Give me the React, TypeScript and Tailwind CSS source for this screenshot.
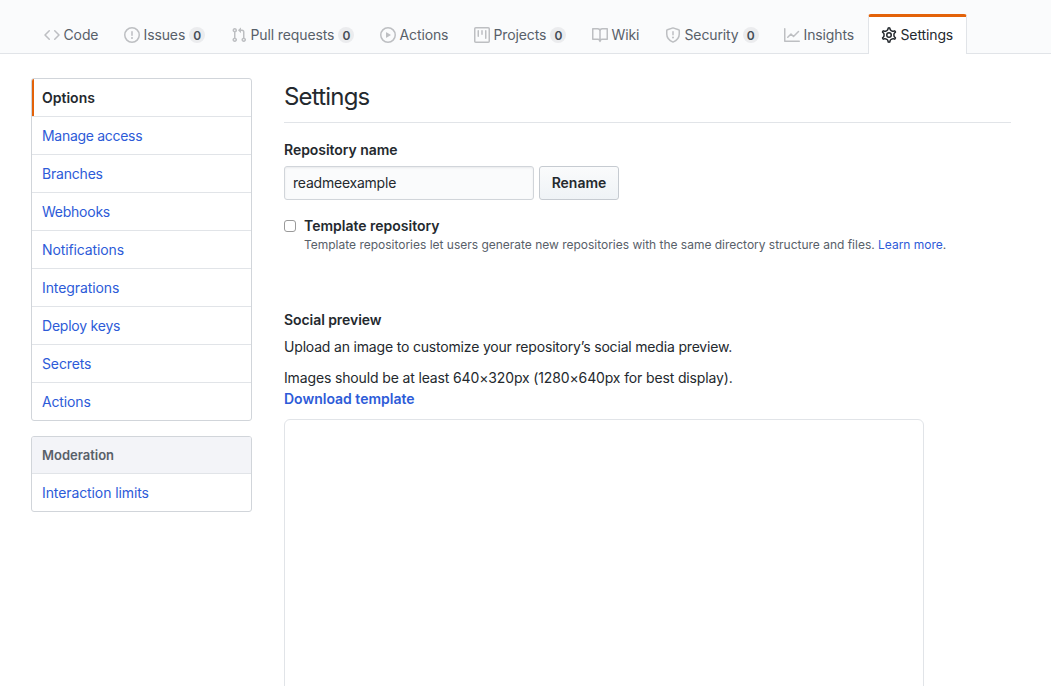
import type { ReactNode } from "react";

const stroke = { fill: "none", stroke: "currentColor", strokeWidth: 1.5 } as const;

function Icon({ children }: { children: ReactNode }) {
  return (
    <svg viewBox="0 0 16 16" width="16" height="16" fill="currentColor" fillRule="evenodd" className="shrink-0">
      {children}
    </svg>
  );
}

const icons = {
  code: (
    <path d="M4.72 3.22a.75.75 0 011.06 1.06L2.06 8l3.72 3.72a.75.75 0 11-1.06 1.06L.47 8.53a.75.75 0 010-1.06l4.25-4.25zm6.56 0a.75.75 0 10-1.06 1.06L13.94 8l-3.72 3.72a.75.75 0 101.06 1.06l4.25-4.25a.75.75 0 000-1.06l-4.25-4.25z" />
  ),
  issue: (
    <path d="M8 1.5a6.5 6.5 0 100 13 6.5 6.5 0 000-13zM0 8a8 8 0 1116 0A8 8 0 010 8zm9 3a1 1 0 11-2 0 1 1 0 012 0zm-.25-6.25a.75.75 0 00-1.5 0v3.5a.75.75 0 001.5 0v-3.5z" />
  ),
  pull: (
    <path d="M7.177 3.073L9.573.677A.25.25 0 0110 .854v4.792a.25.25 0 01-.427.177L7.177 3.427a.25.25 0 010-.354zM3.75 2.5a.75.75 0 100 1.5.75.75 0 000-1.5zm-2.25.75a2.25 2.25 0 113 2.122v5.256a2.251 2.251 0 11-1.5 0V5.372A2.25 2.25 0 011.5 3.25zM11 2.5h-1V4h1a1 1 0 011 1v5.628a2.251 2.251 0 101.5 0V5A2.5 2.5 0 0011 2.5zm1 10.25a.75.75 0 111.5 0 .75.75 0 01-1.5 0zM3.75 12a.75.75 0 100 1.5.75.75 0 000-1.5z" />
  ),
  play: (
    <path d="M1.5 8a6.5 6.5 0 1113 0 6.5 6.5 0 01-13 0zM8 0a8 8 0 100 16A8 8 0 008 0zM6.379 5.227A.25.25 0 006 5.442v5.117a.25.25 0 00.379.214l4.264-2.559a.25.25 0 000-.428L6.379 5.227z" />
  ),
  project: (
    <path d="M1.75 0A1.75 1.75 0 000 1.75v12.5C0 15.216.784 16 1.75 16h12.5A1.75 1.75 0 0016 14.25V1.75A1.75 1.75 0 0014.25 0H1.75zM1.5 1.75a.25.25 0 01.25-.25h12.5a.25.25 0 01.25.25v12.5a.25.25 0 01-.25.25H1.75a.25.25 0 01-.25-.25V1.75zM11.75 3a.75.75 0 00-.75.75v7.5a.75.75 0 001.5 0v-7.5a.75.75 0 00-.75-.75zm-8.25.75a.75.75 0 011.5 0v5.5a.75.75 0 01-1.5 0v-5.5zM8 3a.75.75 0 00-.75.75v3.5a.75.75 0 001.5 0v-3.5A.75.75 0 008 3z" />
  ),
  book: (
    <path {...stroke} strokeLinejoin="round" d="M8 4c0-1.24 1-2.25 2.26-2.25h4.99v10.5h-5.1C9 12.25 8 13 8 14.5 8 13 7 12.25 5.85 12.25H.75V1.75h4.99C7 1.75 8 2.76 8 4zv10" />
  ),
  shield: (
    <>
      <path {...stroke} strokeLinejoin="round" d="M8 .9l5.6 1.8c.4.1.65.4.65.8V7c0 3.6-2.1 6.4-6.25 8.1C3.85 13.4 1.75 10.6 1.75 7V3.5c0-.4.25-.7.65-.8z" />
      <path d="M9 10.5a1 1 0 11-2 0 1 1 0 012 0zm-.25-5.75a.75.75 0 00-1.5 0v3a.75.75 0 001.5 0v-3z" />
    </>
  ),
  graph: (
    <path {...stroke} strokeLinecap="round" strokeLinejoin="round" d="M.75 1.75v12.5h14.5M3.75 10.25L7 7l2.5 2.5 5-5" />
  ),
  gear: (
    <>
      <g transform="translate(8 8) scale(1.1) translate(-8 -8)">
        <path {...stroke} strokeWidth={1.35} d="M7.429 1.525a6.593 6.593 0 011.142 0c.036.003.108.036.137.146l.289 1.105c.147.56.55.967.997 1.189.174.086.341.183.501.29.417.278.97.423 1.53.27l1.102-.303c.11-.03.175.016.195.046.219.31.41.641.573.989.014.031.022.11-.059.19l-.815.806c-.411.406-.562.957-.53 1.456a4.588 4.588 0 010 .582c-.032.499.119 1.05.53 1.456l.815.806c.08.08.073.159.059.19a6.494 6.494 0 01-.573.99c-.02.029-.086.074-.195.045l-1.103-.303c-.559-.153-1.112-.008-1.529.27-.16.107-.327.204-.5.29-.449.222-.851.628-.998 1.189l-.289 1.105c-.029.11-.101.143-.137.146a6.613 6.613 0 01-1.142 0c-.036-.003-.108-.037-.137-.146l-.289-1.105c-.147-.56-.55-.967-.997-1.189a4.502 4.502 0 01-.501-.29c-.417-.278-.97-.423-1.53-.27l-1.102.303c-.11.03-.175-.016-.195-.046a6.492 6.492 0 01-.573-.989c-.014-.031-.022-.11.059-.19l.815-.806c.411-.406.562-.957.53-1.456a4.587 4.587 0 010-.582c.032-.499-.119-1.05-.53-1.456l-.815-.806c-.08-.08-.073-.159-.059-.19a6.44 6.44 0 01.573-.99c.02-.029.086-.075.195-.045l1.103.303c.559.153 1.112.008 1.529-.27.16-.107.327-.204.5-.29.449-.222.851-.628.998-1.189l.289-1.105c.029-.11.101-.143.137-.146z" />
      </g>
      <circle {...stroke} cx="8" cy="8" r="2.25" />
    </>
  ),
};

type Tab = { label: string; icon: keyof typeof icons; width: string; count?: number; active?: boolean };

const tabs: Tab[] = [
  { label: "Code", icon: "code", width: "w-[80px]" },
  { label: "Issues", icon: "issue", width: "w-[107px]", count: 0 },
  { label: "Pull requests", icon: "pull", width: "w-[149px]", count: 0 },
  { label: "Actions", icon: "play", width: "w-[94px]" },
  { label: "Projects", icon: "project", width: "w-[118px]", count: 0 },
  { label: "Wiki", icon: "book", width: "w-[73px]" },
  { label: "Security", icon: "shield", width: "w-[119px]", count: 0 },
  { label: "Insights", icon: "graph", width: "w-[97px]" },
  { label: "Settings", icon: "gear", width: "w-[99px]", active: true },
];

const menu = [
  { label: "Manage access", tracking: "tracking-[-0.3px]" },
  { label: "Branches", tracking: "tracking-[-0.2px]" },
  { label: "Webhooks", tracking: "tracking-[-0.25px]" },
  { label: "Notifications", tracking: "tracking-[-0.12px]" },
  { label: "Integrations", tracking: "tracking-[-0.1px]" },
  { label: "Deploy keys", tracking: "tracking-[-0.22px]" },
  { label: "Secrets", tracking: "tracking-[-0.12px]" },
  { label: "Actions", tracking: "tracking-[-0.15px]" },
];

function TabItem({ tab }: { tab: Tab }) {
  return (
    <a
      className={`flex h-10 shrink-0 items-center whitespace-nowrap pb-[2px] pl-3 tracking-[-0.12px] ${tab.width} ${
        tab.active
          ? "rounded-t-[3px] border-x border-t-[3px] border-x-[#e1e4e8] border-t-[#e36209] bg-white text-[#24292e]"
          : "border-x border-t-[3px] border-transparent text-[#586069]"
      }`}
    >
      <span className={`mr-[3.500px] ${tab.active ? "text-[#24292e]" : "text-[#bdbfc2]"}`}>
        <Icon>{icons[tab.icon]}</Icon>
      </span>
      {tab.label}
      {tab.count !== undefined && (
        <span className="ml-1 mt-px flex h-4 w-4 items-center justify-center rounded-full bg-[#ebecee] text-[12px] font-semibold text-[#444d56]">
          {tab.count}
        </span>
      )}
    </a>
  );
}

export default function App() {
  return (
    <div className="h-[686px] w-[1051px] overflow-hidden bg-white font-['Inter',sans-serif] text-[14px] leading-[21px] text-[#24292e]">
      <header className="flex h-[54px] items-end border-b border-[#e1e4e8] bg-[#fafbfc] pl-[31px]">
        <nav className="-mb-px flex">
          {tabs.map((t) => (
            <TabItem key={t.label} tab={t} />
          ))}
        </nav>
      </header>

      <div className="flex gap-8 pl-[31px] pt-6">
        <aside className="w-[221px] shrink-0">
          <nav className="overflow-hidden rounded-[3px] border border-[#d1d5da]">
            <a className="-ml-px flex h-[37px] items-center border-l-[3px] border-l-[#e36209] pl-2 font-semibold">Options</a>
            {menu.map((m) => (
              <a key={m.label} className={`flex h-[38px] items-center border-t border-[#e1e4e8] pl-[10px] text-[#2d5bd8] ${m.tracking}`}>
                {m.label}
              </a>
            ))}
          </nav>
          <nav className="mt-[15px] overflow-hidden rounded-[3px] border border-[#d1d5da]">
            <div className="flex h-[36px] items-center bg-[#f3f4f8] pl-[10px] pt-px text-[13px] font-semibold text-[#586069]">Moderation</div>
            <a className="flex h-[38px] items-center border-t border-[#e1e4e8] pl-[10px] tracking-[-0.1px] text-[#2d5bd8]">Interaction limits</a>
          </nav>
        </aside>

        <main className="w-[727px] shrink-0">
          <h2 className="h-[45px] border-b border-[#e1e4e8] pt-px text-[24px] leading-[36px] tracking-[-0.8px]">Settings</h2>
          <label className="mt-4 block font-semibold tracking-[-0.05px]">Repository name</label>
          <div className="mt-[6px] flex gap-[5px]">
            <input
              defaultValue="readmeexample"
              className="h-[34px] w-[250px] rounded-[3px] border border-[#d1d5da] bg-[#fafbfc] px-2 pb-[2px] tracking-[-0.22px] shadow-[inset_0_1px_2px_rgba(27,31,35,0.075)] outline-none"
            />
            <button className="h-[34px] w-[80px] rounded-[3px] border border-[#c6cbd1] bg-linear-to-b from-[#fafbfc] to-[#eff3f6] pb-[2px] font-semibold">
              Rename
            </button>
          </div>
          <div className="mt-[15px] flex">
            <span className="mt-[5px] h-3 w-3 shrink-0 rounded-[3px] border border-[#9a9a9a] bg-white" />
            <div className="ml-2">
              <div className="font-semibold">Template repository</div>
              <p className="whitespace-nowrap text-[12px] leading-[18px] tracking-[-0.012px] text-[#586069]">
                Template repositories let users generate new repositories with the same directory structure and files.{" "}
                <a className="text-[#2d5bd8]">Learn more</a>.
              </p>
            </div>
          </div>
          <h3 className="mt-[55px] font-semibold tracking-[-0.07px]">Social preview</h3>
          <p className="mt-[6px] tracking-[-0.18px]">Upload an image to customize your repository’s social media preview.</p>
          <p className="mt-[10px] tracking-[-0.14px]">Images should be at least 640×320px (1280×640px for best display).</p>
          <a className="block font-semibold text-[#2d5bd8]">Download template</a>
          <div className="mt-[10px] h-[320px] w-[640px] rounded-md border border-[#e1e4e8]" />
        </main>
      </div>
    </div>
  );
}
